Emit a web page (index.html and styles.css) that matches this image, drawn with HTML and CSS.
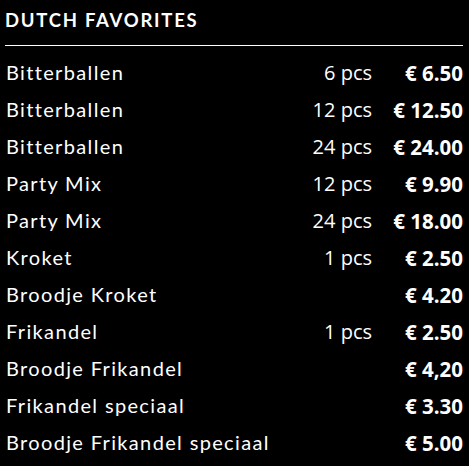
FILE: index.html
```html
<!DOCTYPE html>
<html>
<head>
<meta charset="utf-8">
<link rel="stylesheet" href="styles.css">
</head>
<body>
<section class="menu">
  <h1 class="menu-title">DUTCH FAVORITES</h1>
  <ul class="items">
    <li class="item"><span class="name">Bitterballen</span><span class="qty">6 pcs</span><span class="price">€ 6.50</span></li>
    <li class="item"><span class="name">Bitterballen</span><span class="qty">12 pcs</span><span class="price">€ 12.50</span></li>
    <li class="item"><span class="name">Bitterballen</span><span class="qty">24 pcs</span><span class="price">€ 24.00</span></li>
    <li class="item"><span class="name">Party Mix</span><span class="qty">12 pcs</span><span class="price">€ 9.90</span></li>
    <li class="item"><span class="name">Party Mix</span><span class="qty">24 pcs</span><span class="price">€ 18.00</span></li>
    <li class="item"><span class="name">Kroket</span><span class="qty">1 pcs</span><span class="price">€ 2.50</span></li>
    <li class="item"><span class="name">Broodje Kroket</span><span class="qty"></span><span class="price">€ 4.20</span></li>
    <li class="item"><span class="name">Frikandel</span><span class="qty">1 pcs</span><span class="price">€ 2.50</span></li>
    <li class="item"><span class="name">Broodje Frikandel</span><span class="qty"></span><span class="price">€ 4,20</span></li>
    <li class="item"><span class="name">Frikandel speciaal</span><span class="qty"></span><span class="price">€ 3.30</span></li>
    <li class="item"><span class="name">Broodje Frikandel speciaal</span><span class="qty"></span><span class="price">€ 5.00</span></li>
  </ul>
</section>
</body>
</html>
```

FILE: styles.css
```css
html, body {
  margin: 0;
  background: #000;
  color: #fff;
}
body {
  padding: 9px 6px 0 5px;
}
.menu-title {
  margin: 0;
  font-family: "Lato", sans-serif;
  font-weight: 700;
  font-size: 18.5px;
  line-height: 22px;
  letter-spacing: 1.75px;
  padding: 0 0 14px 0;
  border-bottom: 1px solid #fff;
}
.items {
  list-style: none;
  margin: 8px 0 0 0;
  padding: 0;
}
.item {
  display: grid;
  grid-template-columns: 1fr auto 91px;
  align-items: center;
  height: 37px;
}
.name {
  font-family: "Lato", sans-serif;
  font-size: 20px;
  letter-spacing: 1.35px;
  padding: 0 0 2px 1px;
}
.qty {
  font-family: "Open Sans", sans-serif;
  font-size: 20px;
  text-align: right;
}
.price {
  font-family: "Open Sans", sans-serif;
  font-weight: 700;
  font-size: 20.5px;
  text-align: right;
}
```
